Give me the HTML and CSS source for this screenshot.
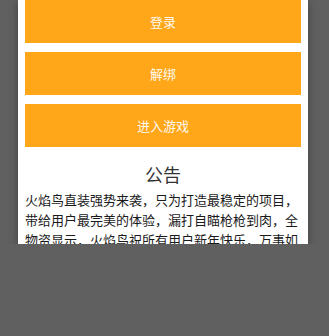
FILE: index.html
```html
<!DOCTYPE html>
<html>
<head>
    <meta charset="utf-8">
    <title>火焰鸟</title>
    <link rel="stylesheet" href="styles.css">
</head>
<body>
    <div class="dialog">
        <div class="actions">
            <button class="action-btn">登录</button>
            <button class="action-btn">解绑</button>
            <button class="action-btn">进入游戏</button>
        </div>
        <h2 class="notice-title">公告</h2>
        <p class="notice-text">火焰鸟直装强势来袭，只为打造最稳定的项目，带给用户最完美的体验，漏打自瞄枪枪到肉，全物资显示，火焰鸟祝所有用户新年快乐，万事如意，欢迎大家加入火焰鸟交流群，获取最新版本与公告。</p>
    </div>
</body>
</html>
```

FILE: styles.css
```css
body {
    margin: 0;
    background: #606060;
    font-family: "Noto Sans CJK SC", "Noto Sans", sans-serif;
}
.dialog {
    width: 276px;
    height: 244px;
    margin-left: 18px;
    padding: 0 7px;
    background: white;
    overflow: hidden;
    box-shadow: 0 2px 8px rgba(0,0,0,0.35);
}
.actions {
    display: flex;
    flex-direction: column;
    gap: 9px;
}
.action-btn {
    height: 43px;
    border: none;
    background: #ffa619;
    color: #fffaf0;
    font-family: inherit;
    font-size: 13px;
    padding: 0;
}
.notice-title {
    margin: 15px 0 4px 0;
    font-size: 18px;
    font-weight: normal;
    line-height: 24px;
    text-align: center;
    color: #333;
}
.notice-text {
    margin: 0;
    font-size: 13px;
    line-height: 20px;
    color: #1a1a1a;
}
```
